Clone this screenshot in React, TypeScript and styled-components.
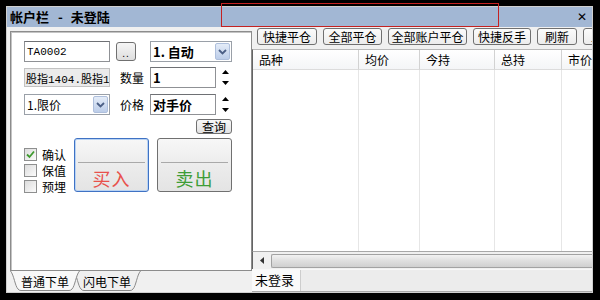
import React from "react";
import styled, { createGlobalStyle } from "styled-components";

const GlobalStyle = createGlobalStyle`
  html, body {
    margin: 0;
    padding: 0;
    background: #000;
  }
  body {
    font-family: "Noto Sans CJK SC", "Liberation Sans", sans-serif;
    font-size: 12px;
    color: #000;
  }
`;

const Frame = styled.div`
  position: relative;
  width: 600px;
  height: 300px;
  box-sizing: border-box;
  padding: 6px 7px 7px 6px;
  background: #000;
`;

const Window = styled.div`
  height: 100%;
  box-sizing: border-box;
  border: 1px solid #cfcfcf;
  background: #f0f0f0;
  display: flex;
  flex-direction: column;
`;

const TitleBar = styled.div`
  flex: none;
  height: 20px;
  background: #a2b7d4;
  display: flex;
  align-items: center;
  justify-content: space-between;
  padding: 0 5px 0 3px;
  font-size: 13px;
  font-weight: bold;
  line-height: 20px;
`;

const TitleText = styled.span`
  display: flex;
  align-items: center;
`;

const Dash = styled.span`
  margin: 0 8px 0 9px;
`;

const Close = styled.span`
  font-family: "DejaVu Sans", sans-serif;
  font-size: 12px;
`;

const HighlightBox = styled.div`
  position: absolute;
  left: 221px;
  top: 3px;
  width: 278px;
  height: 24px;
  box-sizing: border-box;
  border: 1px solid #c42222;
  pointer-events: none;
`;

const Body = styled.div`
  flex: 1;
  display: flex;
  min-height: 0;
`;

const LeftCol = styled.div`
  width: 245px;
  flex: none;
  display: flex;
  flex-direction: column;
`;

const Panel = styled.div`
  flex: 1;
  margin: 4px 0 0 3px;
  background: #fff;
  border: 1px solid #8c8c8c;
  box-shadow: inset 1px 1px 0 #c4c4c4;
  padding: 9px 0 0 13px;
  box-sizing: border-box;
`;

const FormRow = styled.div<{ $mt?: number }>`
  display: flex;
  align-items: center;
  height: 21px;
  margin-top: ${(p) => p.$mt ?? 0}px;
`;

const TextInput = styled.div<{ $w: number; $bold?: boolean }>`
  width: ${(p) => p.$w}px;
  height: 21px;
  box-sizing: border-box;
  border: 1px solid #8f9195;
  border-top-color: #6e7074;
  background: #fff;
  padding: 0 2px;
  display: flex;
  align-items: center;
  font-family: ${(p) =>
    p.$bold
      ? `"Noto Sans CJK SC", sans-serif`
      : `"Liberation Mono", "Noto Sans CJK SC", monospace`};
  font-size: ${(p) => (p.$bold ? 13 : 11)}px;
  font-weight: ${(p) => (p.$bold ? "bold" : "normal")};
  white-space: nowrap;
  overflow: hidden;
`;

const ReadBox = styled.div`
  width: 86px;
  height: 19px;
  box-sizing: border-box;
  border: 1px solid #c2c2c2;
  background: #ebebeb;
  padding: 0 1px;
  display: flex;
  align-items: center;
  font-family: "Liberation Mono", "Noto Sans CJK SC", monospace;
  font-size: 11px;
  white-space: nowrap;
  overflow: hidden;
`;

const DotsButton = styled.div`
  margin-left: 6px;
  width: 20px;
  height: 19px;
  box-sizing: border-box;
  border: 1px solid #707070;
  border-radius: 3px;
  background: linear-gradient(#f6f6f6, #dedede);
  font-family: "Liberation Sans", sans-serif;
  font-size: 10px;
  line-height: 22px;
  text-align: center;
  letter-spacing: 1px;
`;

const SelectBox = styled.div<{ $w: number; $ml?: number; $bold?: boolean }>`
  width: ${(p) => p.$w}px;
  margin-left: ${(p) => p.$ml ?? 0}px;
  height: 21px;
  box-sizing: border-box;
  border: 1px solid #9aa0a8;
  background: #fff;
  display: flex;
  align-items: center;
  justify-content: space-between;
  padding: 0 1px 0 2px;
  font-size: ${(p) => (p.$bold ? 13 : 12)}px;
  font-weight: ${(p) => (p.$bold ? "bold" : "normal")};
  white-space: nowrap;
`;

const DropArrow = styled.div`
  width: 15px;
  height: 17px;
  box-sizing: border-box;
  border: 1px solid #aebfdc;
  border-radius: 2px;
  background: linear-gradient(#e4ecf8, #bccde9);
  display: flex;
  align-items: center;
  justify-content: center;
`;

const FieldLabel = styled.span`
  width: 30px;
  margin-left: 10px;
  font-size: 12px;
`;

const Spinner = styled.div`
  margin-left: 3px;
  width: 13px;
  height: 21px;
  display: flex;
  flex-direction: column;
  align-items: center;
  justify-content: space-between;
  padding: 3px 0 3px;
  box-sizing: border-box;
`;

const QueryRow = styled.div`
  width: 208px;
  margin-top: 4px;
  display: flex;
  justify-content: flex-end;
`;

const SmallButton = styled.div`
  height: 15px;
  padding: 0 5px;
  box-sizing: border-box;
  border: 1px solid #707070;
  border-radius: 3px;
  background: linear-gradient(#f8f8f8, #e2e2e2);
  font-size: 12px;
  line-height: 13px;
`;

const ActionRow = styled.div`
  display: flex;
  margin-top: 4px;
`;

const CheckCol = styled.div`
  width: 50px;
  padding-top: 8px;
  display: flex;
  flex-direction: column;
`;

const CheckItem = styled.div`
  height: 16px;
  display: flex;
  align-items: center;
  gap: 5px;
  font-size: 12px;
`;

const CheckBox = styled.div`
  width: 13px;
  height: 13px;
  box-sizing: border-box;
  border: 1px solid #8e8f8f;
  background: linear-gradient(135deg, #dcdcdc, #fbfbfb);
  display: flex;
  align-items: center;
  justify-content: center;
`;

const TradeButton = styled.div<{ $focus?: boolean }>`
  width: 75px;
  height: 54px;
  box-sizing: border-box;
  border: 1px solid ${(p) => (p.$focus ? "#3f72c4" : "#707070")};
  box-shadow: ${(p) => (p.$focus ? "inset 0 0 0 1px #b9d3f3" : "none")};
  border-radius: 3px;
  background: linear-gradient(#f7f7f7, #ececec 50%, #e4e4e4);
  display: flex;
  flex-direction: column;
  margin-right: 8px;
`;

const TradeTop = styled.div`
  height: 26px;
  margin: 0 3px;
  border-bottom: 1px solid #a9a9a9;
`;

const TradeLabel = styled.div<{ $color: string }>`
  flex: 1;
  display: flex;
  align-items: center;
  justify-content: center;
  padding-top: 2px;
  font-size: 18px;
  letter-spacing: 1px;
  color: ${(p) => p.$color};
`;

const TabStrip = styled.div`
  height: 21px;
  flex: none;
  display: flex;
  padding-left: 3px;
`;

const Tab = styled.div<{ $w: number; $active?: boolean }>`
  position: relative;
  width: ${(p) => p.$w}px;
  height: 20px;
  margin-left: ${(p) => (p.$active ? 0 : -7)}px;
  z-index: ${(p) => (p.$active ? 2 : 1)};
  display: flex;
  align-items: center;
  justify-content: center;
  font-size: 12px;
  svg {
    position: absolute;
    inset: 0;
    z-index: -1;
  }
`;

const RightCol = styled.div`
  flex: 1;
  min-width: 0;
  display: flex;
  flex-direction: column;
`;

const Toolbar = styled.div`
  height: 22px;
  flex: none;
  display: flex;
  gap: 6px;
  padding: 1px 0 0 5px;
  box-sizing: border-box;
  overflow: hidden;
`;

const ToolButton = styled.div<{ $w: number }>`
  flex: 0 0 ${(p) => p.$w}px;
  height: 17px;
  box-sizing: border-box;
  border: 1px solid #707070;
  border-radius: 3px;
  background: linear-gradient(#fbfbfb, #ececec);
  font-size: 12px;
  line-height: 15px;
  text-align: center;
  white-space: nowrap;
  overflow: hidden;
`;

const Grid = styled.div`
  flex: 1;
  display: flex;
  background: #fff;
  border-left: 1px solid #646464;
  border-top: 1px solid #b8b8b8;
  overflow: hidden;
`;

const Column = styled.div<{ $w?: number }>`
  flex: ${(p) => (p.$w ? `0 0 ${p.$w}px` : "0 0 60px")};
  display: flex;
  flex-direction: column;
  border-right: 1px solid #e6e6e6;
`;

const HeadCell = styled.div`
  height: 20px;
  box-sizing: border-box;
  padding-left: 6px;
  line-height: 20px;
  font-size: 12px;
  white-space: nowrap;
  background: linear-gradient(#ffffff, #f4f5f7);
  border-bottom: 1px solid #dcdcdc;
  border-right: 1px solid #d2d2d2;
  margin-right: -1px;
`;

const ScrollBar = styled.div`
  height: 17px;
  flex: none;
  display: flex;
  align-items: center;
  background: #f0f0f0;
  border-top: 1px solid #a8a8a8;
  border-left: 1px solid #646464;
`;

const ScrollArrow = styled.div`
  width: 18px;
  display: flex;
  justify-content: center;
`;

const ScrollThumb = styled.div`
  flex: 1;
  height: 14px;
  box-sizing: border-box;
  border: 1px solid #a2a2a2;
  border-right: none;
  border-radius: 2px 0 0 2px;
  background: linear-gradient(#f2f2f2, #dedede 50%, #cfcfcf);
`;

const StatusBar = styled.div`
  height: 21px;
  flex: none;
  display: flex;
  background: #ececec;
  border-top: 1px solid #f8f8f8;
  border-bottom: 1px solid #a8a8a8;
`;

const StatusTab = styled.div`
  width: 49px;
  padding-left: 3px;
  box-sizing: border-box;
  background: #fafafa;
  border-right: 1px solid #cdcdcd;
  font-size: 13px;
  line-height: 20px;
`;

const Chevron = () => (
  <svg width="9" height="6" viewBox="0 0 9 6">
    <path d="M1 1 L4.5 4.5 L8 1" fill="none" stroke="#4b5f86" strokeWidth="1.8" />
  </svg>
);

const SpinArrows = () => (
  <Spinner>
    <svg width="7" height="4" viewBox="0 0 7 4">
      <path d="M0 4 L3.5 0 L7 4 Z" fill="#000" />
    </svg>
    <svg width="7" height="4" viewBox="0 0 7 4">
      <path d="M0 0 L7 0 L3.5 4 Z" fill="#000" />
    </svg>
  </Spinner>
);

const Check = ({ checked, label }: { checked?: boolean; label: string }) => (
  <CheckItem>
    <CheckBox>
      {checked && (
        <svg width="9" height="9" viewBox="0 0 9 9">
          <path d="M1 4.5 L3.5 7 L8 1.5" fill="none" stroke="#3f9a2f" strokeWidth="1.8" />
        </svg>
      )}
    </CheckBox>
    <span>{label}</span>
  </CheckItem>
);

const TabShape = ({ w, active }: { w: number; active?: boolean }) => (
  <svg width={w} height="20" viewBox={`0 0 ${w} 20`}>
    <path
      d={`M0.5 0 C4 4 5 15 8 18 Q9 19.5 11 19.5 L${w - 11} 19.5 Q${w - 9} 19.5 ${w - 8} 18 C${w - 5} 15 ${w - 4} 4 ${w - 0.5} 0`}
      fill={active ? "#f8f8f8" : "#efefef"}
      stroke="#8a8a8a"
    />
  </svg>
);

const columns = [
  { title: "品种", w: 105 },
  { title: "均价", w: 60 },
  { title: "今持", w: 74 },
  { title: "总持", w: 66 },
  { title: "市价" },
];

const toolButtons = [
  { label: "快捷平仓", w: 60 },
  { label: "全部平仓", w: 59 },
  { label: "全部账户平仓", w: 79 },
  { label: "快捷反手", w: 58 },
  { label: "刷新", w: 40 },
  { label: "止损", w: 40 },
];

export default function App() {
  return (
    <Frame>
      <GlobalStyle />
      <Window>
        <TitleBar>
          <TitleText>
            帐户栏<Dash>-</Dash>未登陆
          </TitleText>
          <Close>✕</Close>
        </TitleBar>
        <Body>
          <LeftCol>
            <Panel>
              <FormRow>
                <TextInput $w={86}>TA0002</TextInput>
                <DotsButton>..</DotsButton>
                <SelectBox $w={82} $ml={14} $bold>
                  <span>1. 自动</span>
                  <DropArrow>
                    <Chevron />
                  </DropArrow>
                </SelectBox>
              </FormRow>
              <FormRow $mt={5}>
                <ReadBox>股指1404.股指1</ReadBox>
                <FieldLabel>数量</FieldLabel>
                <TextInput $w={66} $bold>
                  1
                </TextInput>
                <SpinArrows />
              </FormRow>
              <FormRow $mt={6}>
                <SelectBox $w={86}>
                  <span>1.限价</span>
                  <DropArrow>
                    <Chevron />
                  </DropArrow>
                </SelectBox>
                <FieldLabel>价格</FieldLabel>
                <TextInput $w={66} $bold>
                  对手价
                </TextInput>
                <SpinArrows />
              </FormRow>
              <QueryRow>
                <SmallButton>查询</SmallButton>
              </QueryRow>
              <ActionRow>
                <CheckCol>
                  <Check checked label="确认" />
                  <Check label="保值" />
                  <Check label="预埋" />
                </CheckCol>
                <TradeButton $focus>
                  <TradeTop />
                  <TradeLabel $color="#e8514c">买入</TradeLabel>
                </TradeButton>
                <TradeButton>
                  <TradeTop />
                  <TradeLabel $color="#3e9d37">卖出</TradeLabel>
                </TradeButton>
              </ActionRow>
            </Panel>
            <TabStrip>
              <Tab $w={70} $active>
                <TabShape w={70} active />
                普通下单
              </Tab>
              <Tab $w={68}>
                <TabShape w={68} />
                闪电下单
              </Tab>
            </TabStrip>
          </LeftCol>
          <RightCol>
            <Toolbar>
              {toolButtons.map((b) => (
                <ToolButton key={b.label} $w={b.w}>
                  {b.label}
                </ToolButton>
              ))}
            </Toolbar>
            <Grid>
              {columns.map((c) => (
                <Column key={c.title} $w={c.w}>
                  <HeadCell>{c.title}</HeadCell>
                </Column>
              ))}
            </Grid>
            <ScrollBar>
              <ScrollArrow>
                <svg width="4" height="7" viewBox="0 0 4 7">
                  <path d="M4 0 L0 3.5 L4 7 Z" fill="#333" />
                </svg>
              </ScrollArrow>
              <ScrollThumb />
            </ScrollBar>
            <StatusBar>
              <StatusTab>未登录</StatusTab>
            </StatusBar>
          </RightCol>
        </Body>
      </Window>
      <HighlightBox />
    </Frame>
  );
}
